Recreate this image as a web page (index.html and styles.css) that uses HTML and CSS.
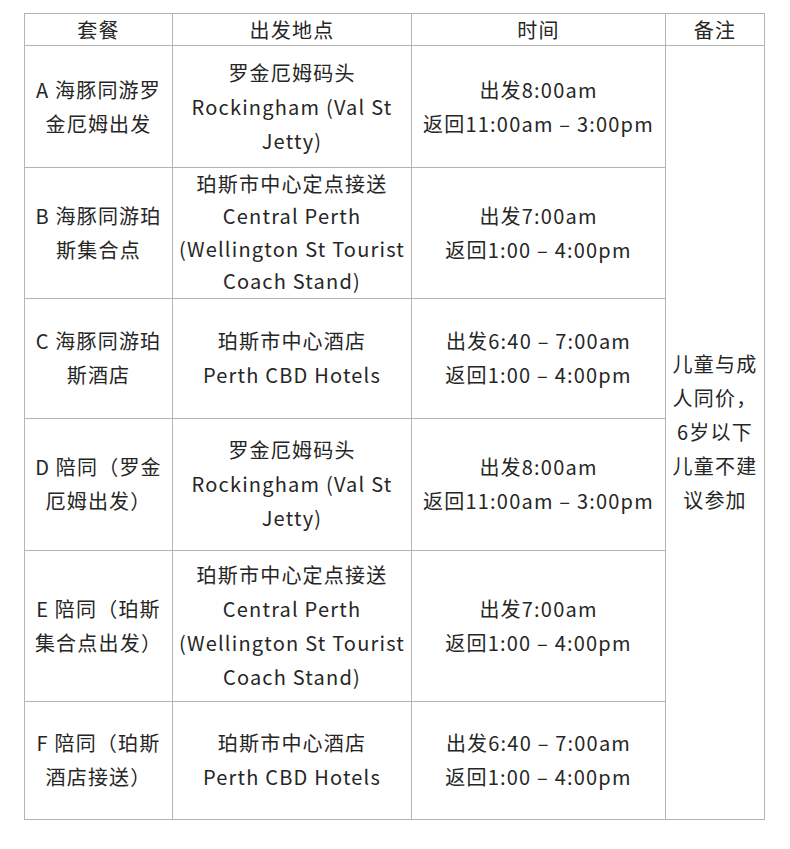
FILE: index.html
```html
<!DOCTYPE html>
<html lang="zh-CN">
<head>
<meta charset="utf-8">
<title>套餐</title>
<link rel="stylesheet" href="styles.css">
</head>
<body>
<table class="plan">
  <colgroup>
    <col class="c-pkg">
    <col class="c-loc">
    <col class="c-time">
    <col class="c-note">
  </colgroup>
  <thead>
    <tr class="r-head">
      <th>套餐</th>
      <th>出发地点</th>
      <th>时间</th>
      <th>备注</th>
    </tr>
  </thead>
  <tbody>
    <tr class="r-a">
      <td>A 海豚同游罗<br>金厄姆出发</td>
      <td>罗金厄姆码头<br>Rockingham (Val St<br>Jetty)</td>
      <td>出发8:00am<br>返回11:00am – 3:00pm</td>
      <td class="note" rowspan="6">儿童与成<br>人同价，<br>6岁以下<br>儿童不建<br>议参加</td>
    </tr>
    <tr class="r-b">
      <td>B 海豚同游珀<br>斯集合点</td>
      <td class="tight">珀斯市中心定点接送<br>Central Perth<br>(Wellington St Tourist<br>Coach Stand)</td>
      <td>出发7:00am<br>返回1:00 – 4:00pm</td>
    </tr>
    <tr class="r-c">
      <td>C 海豚同游珀<br>斯酒店</td>
      <td>珀斯市中心酒店<br>Perth CBD Hotels</td>
      <td>出发6:40 – 7:00am<br>返回1:00 – 4:00pm</td>
    </tr>
    <tr class="r-d">
      <td>D 陪同（罗金<br>厄姆出发）</td>
      <td>罗金厄姆码头<br>Rockingham (Val St<br>Jetty)</td>
      <td>出发8:00am<br>返回11:00am – 3:00pm</td>
    </tr>
    <tr class="r-e">
      <td>E 陪同（珀斯<br>集合点出发）</td>
      <td>珀斯市中心定点接送<br>Central Perth<br>(Wellington St Tourist<br>Coach Stand)</td>
      <td>出发7:00am<br>返回1:00 – 4:00pm</td>
    </tr>
    <tr class="r-f">
      <td>F 陪同（珀斯<br>酒店接送）</td>
      <td>珀斯市中心酒店<br>Perth CBD Hotels</td>
      <td>出发6:40 – 7:00am<br>返回1:00 – 4:00pm</td>
    </tr>
  </tbody>
</table>
</body>
</html>
```

FILE: styles.css
```css
html, body {
  margin: 0;
  padding: 0;
  background: #ffffff;
}

body {
  padding: 13px 0 0 24px;
  font-family: "Noto Sans CJK SC", "Noto Sans", sans-serif;
  color: #262626;
}

.plan {
  border-collapse: collapse;
  table-layout: fixed;
  width: 740px;
  font-size: 20px;
  line-height: 34px;
  letter-spacing: 1.2px;
}

.c-pkg { width: 148px; }
.c-loc { width: 239px; }
.c-time { width: 254px; }
.c-note { width: 99px; }

.plan th,
.plan td {
  border: 1px solid #b4b4b4;
  padding: 0;
  text-align: center;
  vertical-align: middle;
  font-weight: 400;
  white-space: nowrap;
}

.plan th {
  line-height: 30px;
}

.plan td.tight {
  line-height: 32.4px;
}

.r-head { height: 32px; }
.r-a { height: 122px; }
.r-b { height: 130px; }
.r-c { height: 120px; }
.r-d { height: 132px; }
.r-e { height: 151px; }
.r-f { height: 118px; }
```
